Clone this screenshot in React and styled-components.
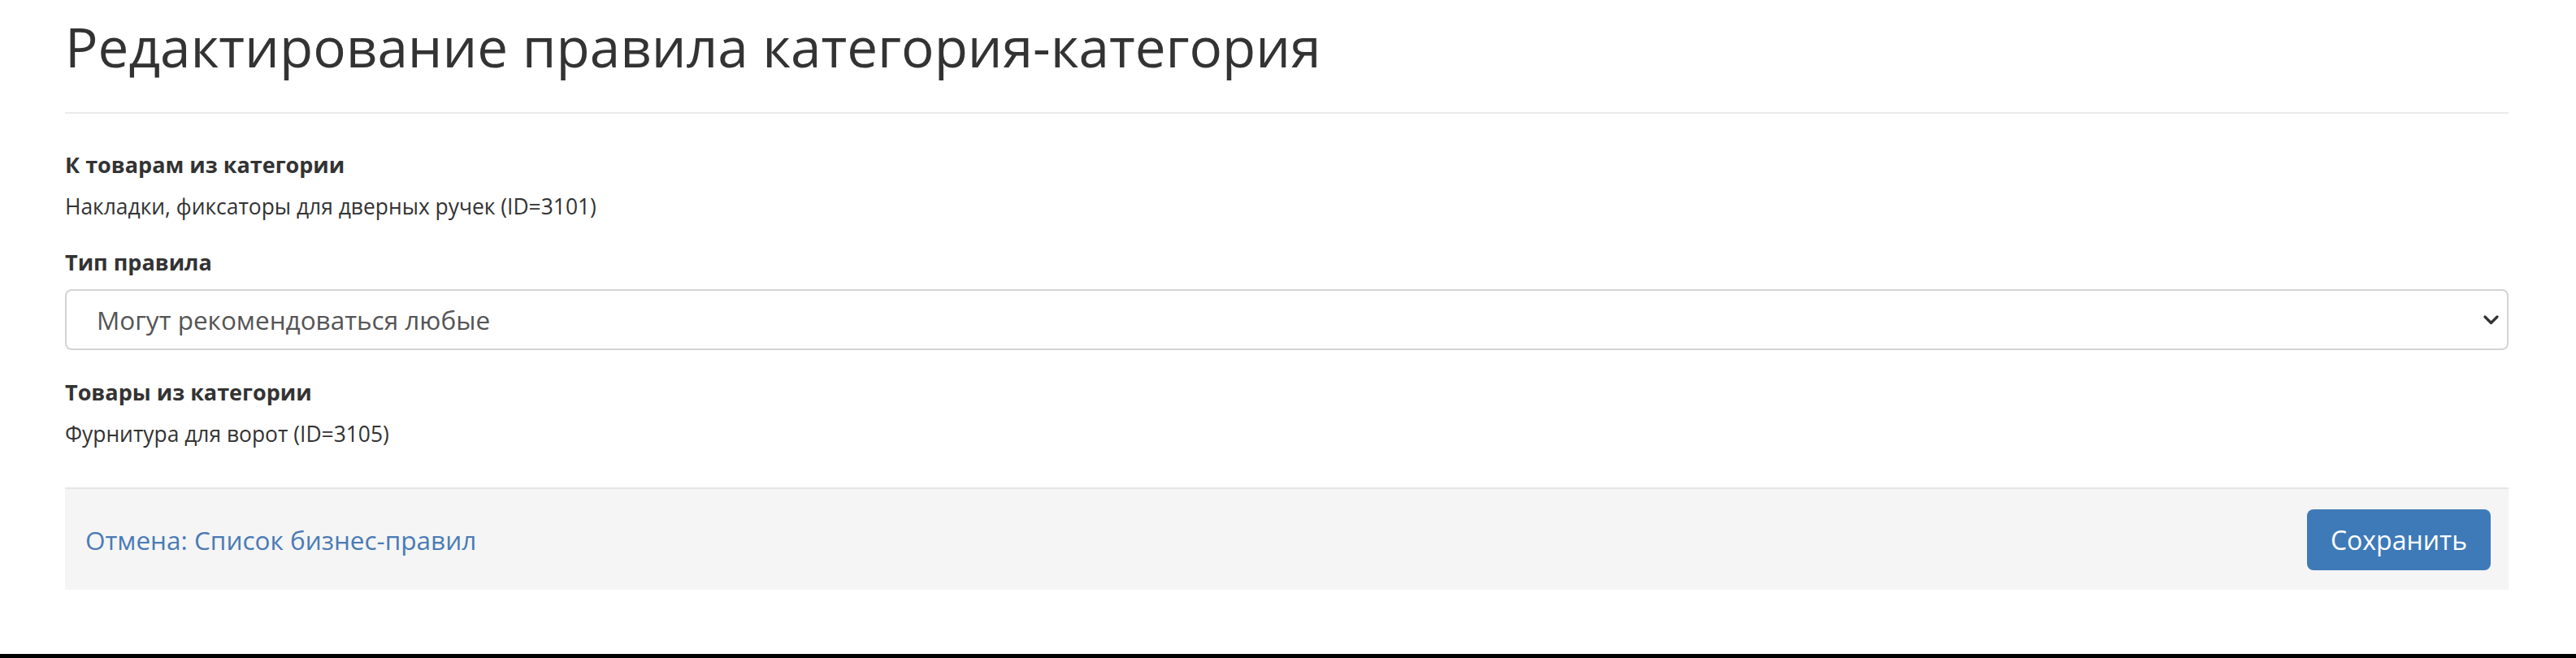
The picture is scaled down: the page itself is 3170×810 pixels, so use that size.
import React from 'react';
import styled, { createGlobalStyle } from 'styled-components';

const GlobalStyle = createGlobalStyle`
  html, body {
    margin: 0;
    padding: 0;
    background: #fff;
  }
  body {
    font-family: "Open Sans", "Liberation Sans", sans-serif;
    color: #333;
  }
`;

const Page = styled.div`
  box-sizing: border-box;
  height: 810px;
  padding: 0 83px 0 80px;
  border-bottom: 5px solid #000;
`;

const PageHeader = styled.header`
  padding: 20px 0 44px;
  border-bottom: 2px solid #ebebeb;
  margin-bottom: 45px;
`;

const Title = styled.h1`
  margin: 0;
  font-size: 67.4px;
  line-height: 74px;
  font-weight: 400;
  color: #333;
`;

const FormGroup = styled.div`
  margin-bottom: ${(p) => p.$gap || 33}px;
`;

const Label = styled.div`
  font-size: 27px;
  line-height: 36px;
  font-weight: 700;
  color: #333;
  margin-bottom: 15px;
`;

const Value = styled.div`
  font-size: 26.4px;
  line-height: 36px;
  color: #333;
`;

const SelectBox = styled.div`
  box-sizing: border-box;
  height: 75px;
  display: flex;
  align-items: center;
  justify-content: space-between;
  padding: 0 10px 0 37px;
  border: 2px solid #d4d4d4;
  border-radius: 8px;
  background: #fff;
  font-size: 31.5px;
  color: #555;
`;

const Chevron = styled.svg`
  width: 19px;
  height: 12px;
  flex-shrink: 0;
`;

const Footer = styled.div`
  box-sizing: border-box;
  display: flex;
  align-items: center;
  justify-content: space-between;
  height: 126px;
  margin-top: 48px;
  padding: 0 22px 0 25px;
  background: #f5f5f5;
  border-top: 2px solid #e5e5e5;
`;

const CancelLink = styled.a`
  font-size: 31.5px;
  color: #4a7bb5;
  text-decoration: none;
`;

const SaveButton = styled.button`
  box-sizing: border-box;
  height: 75px;
  padding: 0 29px;
  border: 0;
  border-radius: 8px;
  background: #3e7ab8;
  color: #fff;
  font-family: inherit;
  font-size: 32px;
`;

export default function App() {
  return (
    <>
      <GlobalStyle />
      <Page>
        <PageHeader>
          <Title>Редактирование правила категория-категория</Title>
        </PageHeader>
        <FormGroup>
          <Label>К товарам из категории</Label>
          <Value>Накладки, фиксаторы для дверных ручек (ID=3101)</Value>
        </FormGroup>
        <FormGroup $gap={34}>
          <Label>Тип правила</Label>
          <SelectBox role="combobox">
            <span>Могут рекомендоваться любые</span>
            <Chevron viewBox="0 0 19 12">
              <polyline
                points="2,2 9.5,9.5 17,2"
                fill="none"
                stroke="#333"
                strokeWidth="3.2"
                strokeLinecap="round"
                strokeLinejoin="round"
              />
            </Chevron>
          </SelectBox>
        </FormGroup>
        <FormGroup $gap={0}>
          <Label>Товары из категории</Label>
          <Value>Фурнитура для ворот (ID=3105)</Value>
        </FormGroup>
        <Footer>
          <CancelLink href="#">Отмена: Список бизнес-правил</CancelLink>
          <SaveButton>Сохранить</SaveButton>
        </Footer>
      </Page>
    </>
  );
}
